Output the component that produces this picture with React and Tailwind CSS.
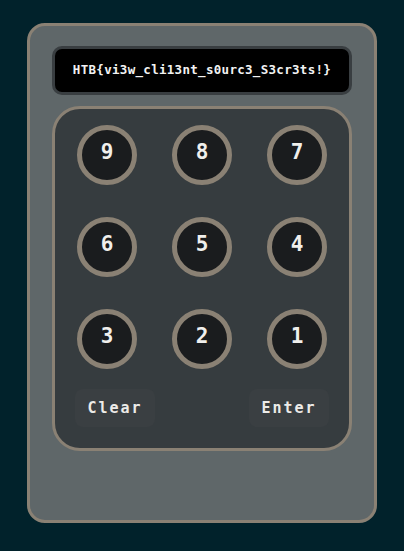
import React from 'react';

const keys = ['9', '8', '7', '6', '5', '4', '3', '2', '1'];

export default function App() {
    return (
        <div className="min-h-[551px] w-full bg-[#01222b] pt-[23px] pl-[27px]" style={{ fontFamily: '"DejaVu Sans Mono", "Liberation Mono", monospace' }}>
            <div className="w-[350px] h-[500px] rounded-[18px] border-[3px] border-[#8a8174] bg-[#5f6769] pt-[20px] pl-[22px]">
                {/* display */}
                <div className="w-[300px] h-[49px] rounded-[10px] border-[3px] border-[#393e41] bg-black flex items-center justify-center">
                    <span className="text-[12.5px] font-bold text-[#f2f2f2] tracking-[0.3px]">HTB{'{'}vi3w_cli13nt_s0urc3_S3cr3ts!{'}'}</span>
                </div>

                {/* keypad */}
                <div className="mt-[11px] w-[300px] h-[345px] rounded-[28px] border-[3px] border-[#8a8174] bg-[#363c3f] pt-[16px] px-[20px]">
                    <div className="grid gap-y-[32px] px-[2px] justify-between" style={{ gridTemplateColumns: 'repeat(3, 60px)' }}>
                        {keys.map((k) => (
                            <button key={k} className="w-[60px] h-[60px] rounded-full border-[5px] border-[#8a8174] bg-[#1a1c1e] text-[#f0efec] text-[21px] font-bold flex items-center justify-center pb-[4px]">
                                {k}
                            </button>
                        ))}
                    </div>
                    <div className="mt-[20px] flex justify-between">
                        <button className="w-[80px] h-[38px] rounded-[8px] bg-[#3a3f42] text-[#ecebe8] text-[15px] font-bold tracking-[2px]">Clear</button>
                        <button className="w-[80px] h-[38px] rounded-[8px] bg-[#3a3f42] text-[#ecebe8] text-[15px] font-bold tracking-[2px]">Enter</button>
                    </div>
                </div>
            </div>
        </div>
    );
}
